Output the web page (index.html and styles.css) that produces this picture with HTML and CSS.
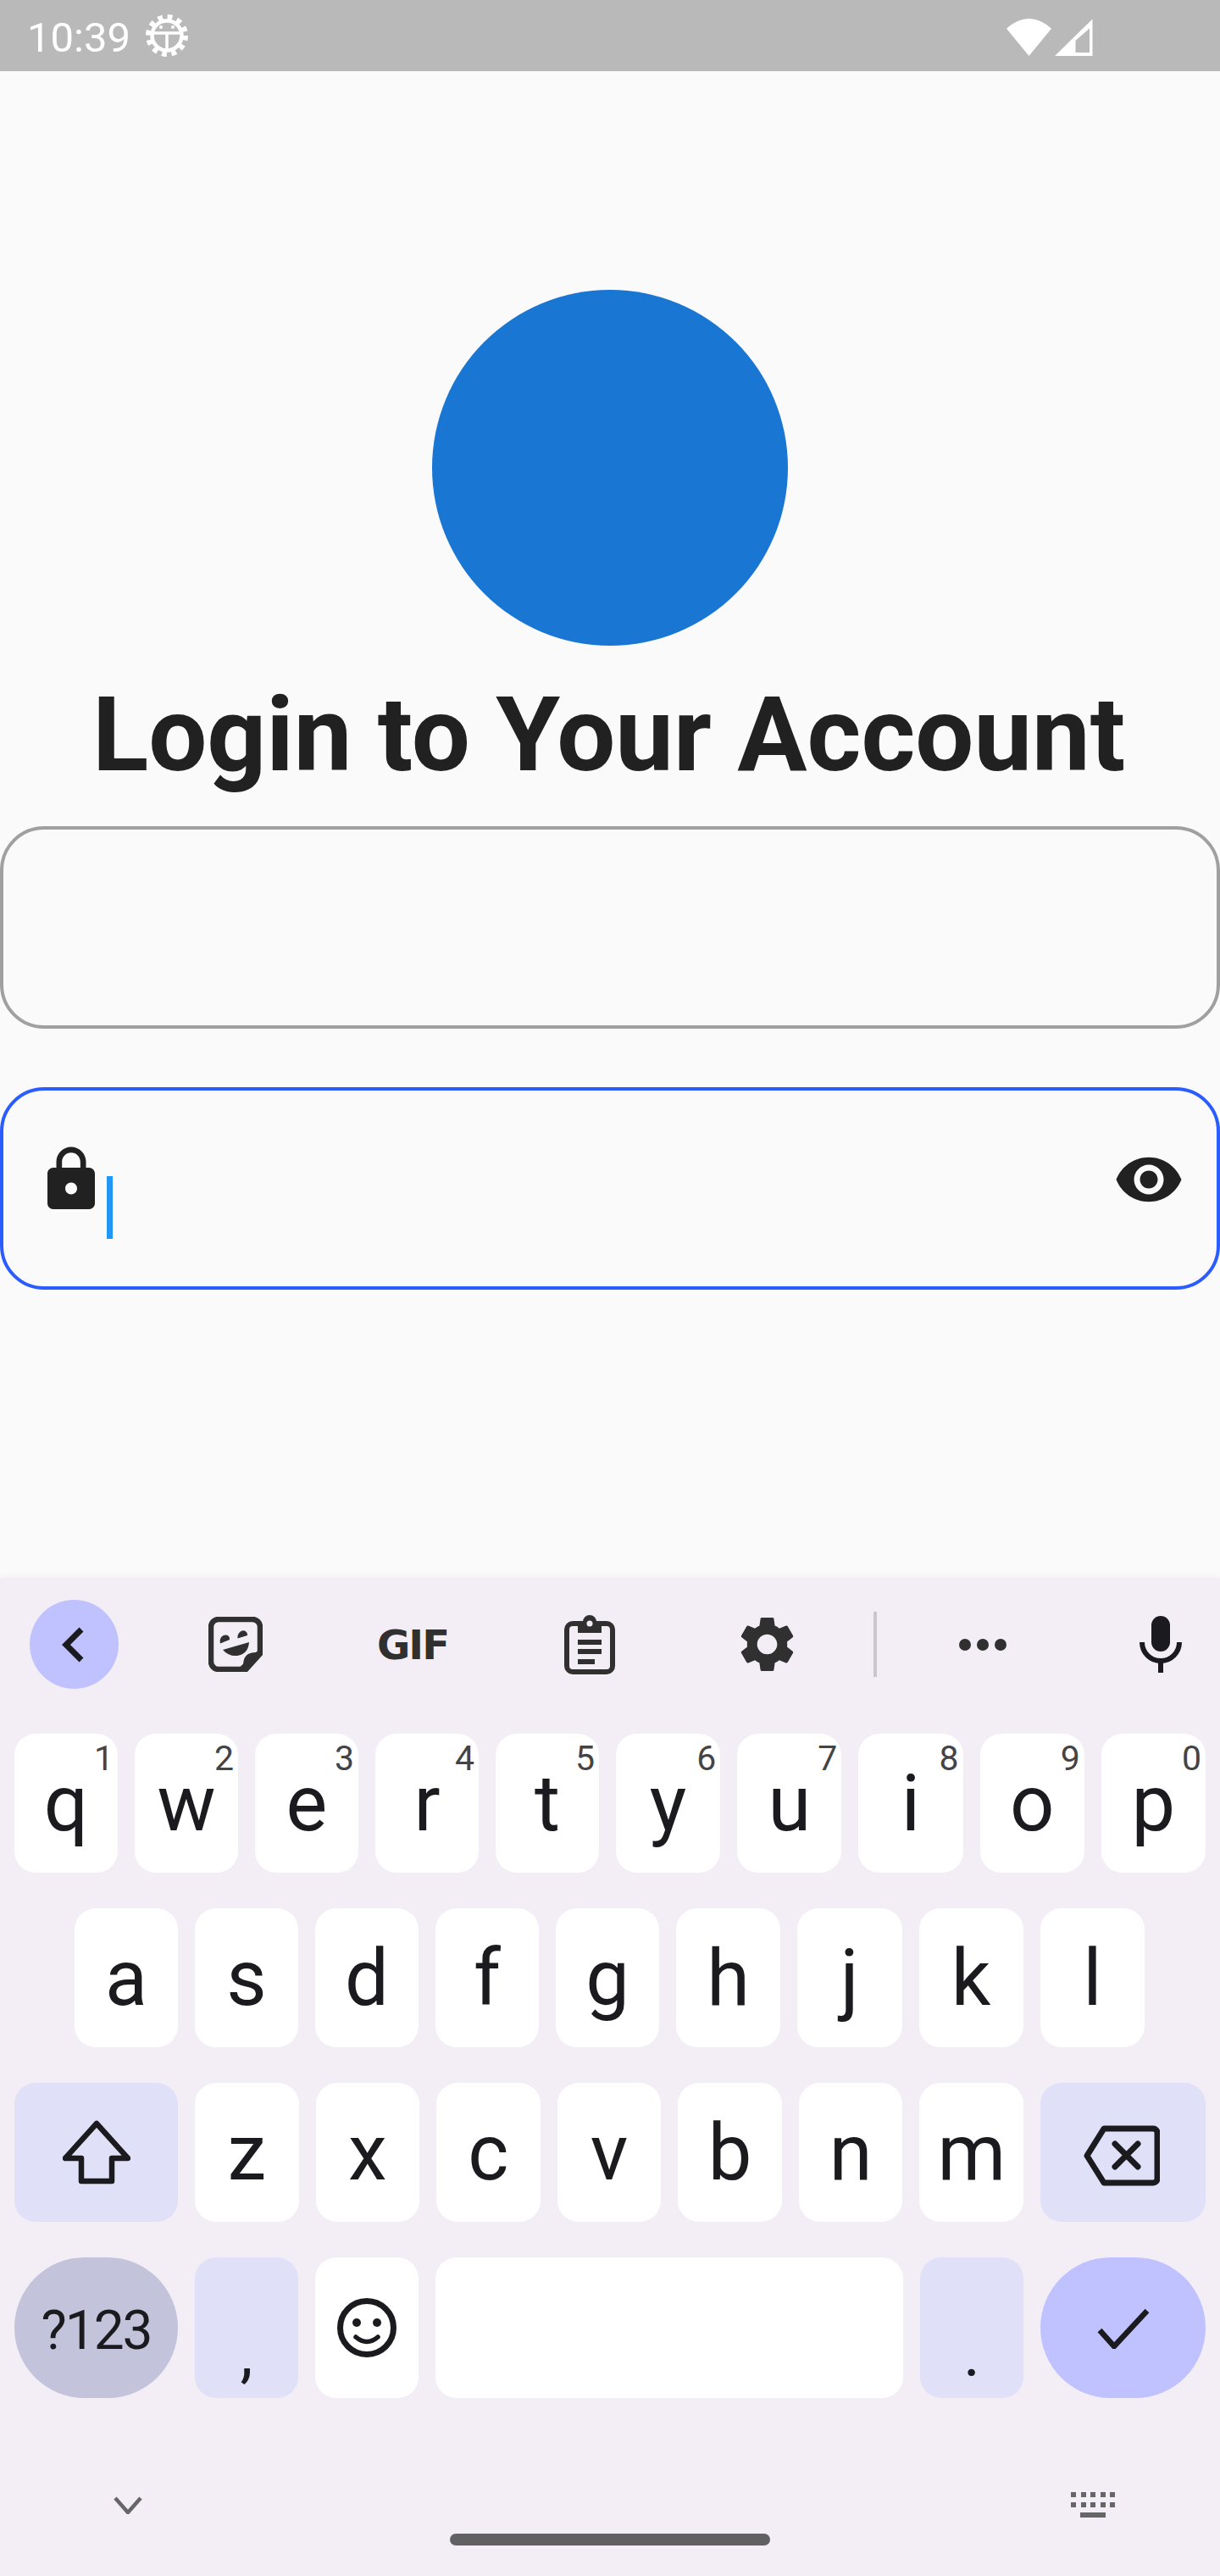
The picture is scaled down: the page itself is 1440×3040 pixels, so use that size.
FILE: index.html
```html
<!DOCTYPE html>
<html lang="en">
<head>
    <meta charset="UTF-8">
    <title>Login to Your Account</title>
    <link rel="stylesheet" href="styles.css">
</head>
<body>
    <div class="phone">
        <div class="status-bar">
            <span class="clock">10:39</span>
            <svg class="debug-icon" viewBox="0 0 52 52">
                <circle cx="26" cy="26" r="21.5" fill="none" stroke="#fff" stroke-width="7" stroke-dasharray="5.6 5.66"/>
                <circle cx="26" cy="26" r="17.5" fill="none" stroke="#fff" stroke-width="4.5"/>
                <path d="M8 23H44M26 23V44" fill="none" stroke="#fff" stroke-width="3.5"/>
                <circle cx="19" cy="16" r="2" fill="#fff"/>
                <circle cx="33" cy="16" r="2" fill="#fff"/>
            </svg>
            <div class="status-right">
                <svg class="wifi-icon" viewBox="0 0 53 44"><path d="M0 11.7Q26.5 -11.7 53 11.7L26.5 44Z" fill="#fff"/></svg>
                <svg class="cell-icon" viewBox="0 0 45 44"><path d="M44.5 0.5V44H0ZM41 11.5L24.5 26V40H41Z" fill="#fff" fill-rule="evenodd"/></svg>
            </div>
        </div>

        <div class="login">
            <div class="logo"></div>
            <h1>Login to Your Account</h1>
            <div class="field"></div>
            <div class="field focused">
                <svg class="field-icon" viewBox="0 0 24 24"><path d="M18 8h-1V6c0-2.76-2.24-5-5-5S7 3.24 7 6v2H6c-1.1 0-2 .9-2 2v10c0 1.1.9 2 2 2h12c1.1 0 2-.9 2-2V10c0-1.1-.9-2-2-2zm-6 9c-1.1 0-2-.9-2-2s.9-2 2-2 2 .9 2 2-.9 2-2 2zm3.1-9H8.9V6c0-1.71 1.39-3.1 3.1-3.1 1.71 0 3.1 1.39 3.1 3.1v2z"/></svg>
                <span class="caret"></span>
                <svg class="field-icon eye" viewBox="0 0 24 24"><path d="M12 4.5C7 4.5 2.73 7.61 1 12c1.73 4.39 6 7.5 11 7.5s9.27-3.11 11-7.5c-1.73-4.39-6-7.5-11-7.5zM12 17c-2.76 0-5-2.24-5-5s2.24-5 5-5 5 2.24 5 5-2.24 5-5 5zm0-8c-1.66 0-3 1.34-3 3s1.34 3 3 3 3-1.34 3-3-1.34-3-3-3z"/></svg>
            </div>
        </div>

        <div class="keyboard">
            <div class="toolbar">
                <div class="tool-back">
                    <svg class="back-icon" viewBox="0 0 105 105"><path d="M61 35L43 53L61 71" fill="none" stroke="#1b1b1f" stroke-width="7"/></svg>
                </div>
                <svg class="sticker-icon" viewBox="0 0 64 65">
                    <path d="M12 3H52a9 9 0 0 1 9 9V42L39 62H12a9 9 0 0 1-9-9V12a9 9 0 0 1 9-9Z" fill="none" stroke="#303030" stroke-width="6.5"/>
                    <path d="M41 65V57Q41 42 56 42H64V45L46 65Z" fill="#303030"/>
                    <path d="M14 31.5C12 24 19 19 24 23Q25.5 25 25 27Z" fill="#303030"/>
                    <path d="M34.5 25.5C33.5 18 42 13 45.5 19Q46 20 46 22Z" fill="#303030"/>
                    <path d="M17 39L48 30Q47 44 34 46Q24 47 17 39Z" fill="#303030"/>
                </svg>
                <span class="gif">GIF</span>
                <svg class="clip-icon" viewBox="0 0 60 70">
                    <rect x="3" y="10" width="54" height="57" rx="7" fill="none" stroke="#303030" stroke-width="6"/>
                    <path d="M16 8H22a8 8 0 0 1 16 0H44V21H16Z" fill="#303030"/>
                    <circle cx="30" cy="10" r="3.5" fill="#f3eef5"/>
                    <path d="M16 32H44M16 43H44M16 55H36" stroke="#303030" stroke-width="6"/>
                </svg>
                <svg class="gear-icon" viewBox="0 0 24 24"><path d="M19.14 12.94c.04-.3.06-.61.06-.94 0-.32-.02-.64-.07-.94l2.03-1.58c.18-.14.23-.41.12-.61l-1.92-3.32c-.12-.22-.37-.29-.59-.22l-2.39.96c-.5-.38-1.03-.7-1.62-.94l-.36-2.54c-.04-.24-.24-.41-.48-.41h-3.84c-.24 0-.43.17-.47.41l-.36 2.54c-.59.24-1.13.57-1.62.94l-2.39-.96c-.22-.08-.47 0-.59.22L2.74 8.87c-.12.21-.08.47.12.61l2.03 1.58c-.05.3-.09.63-.09.94s.02.64.07.94l-2.03 1.58c-.18.14-.23.41-.12.61l1.92 3.32c.12.22.37.29.59.22l2.39-.96c.5.38 1.03.7 1.62.94l.36 2.54c.05.24.24.41.48.41h3.84c.24 0 .44-.17.47-.41l.36-2.54c.59-.24 1.13-.56 1.62-.94l2.39.96c.22.08.47 0 .59-.22l1.92-3.32c.12-.22.07-.47-.12-.61l-2.01-1.58zM12 15.6c-1.98 0-3.6-1.62-3.6-3.6s1.62-3.6 3.6-3.6 3.6 1.62 3.6 3.6-1.62 3.6-3.6 3.6z" fill="#303030"/></svg>
                <div class="tool-divider"></div>
                <div class="tool-dots"><span></span><span></span><span></span></div>
                <svg class="mic-icon" viewBox="0 0 50 68">
                    <rect x="14" y="0" width="22" height="42" rx="11" fill="#1b1b1f"/>
                    <path d="M3 31a22 22 0 0 0 44 0M25 53V67" fill="none" stroke="#1b1b1f" stroke-width="6"/>
                </svg>
            </div>

            <div class="key-rows">
                <div class="key-row letters">
                    <div class="key">q<span class="hint">1</span></div>
                    <div class="key">w<span class="hint">2</span></div>
                    <div class="key">e<span class="hint">3</span></div>
                    <div class="key">r<span class="hint">4</span></div>
                    <div class="key">t<span class="hint">5</span></div>
                    <div class="key">y<span class="hint">6</span></div>
                    <div class="key">u<span class="hint">7</span></div>
                    <div class="key">i<span class="hint">8</span></div>
                    <div class="key">o<span class="hint">9</span></div>
                    <div class="key">p<span class="hint">0</span></div>
                </div>
                <div class="key-row letters home-row">
                    <div class="key">a</div>
                    <div class="key">s</div>
                    <div class="key">d</div>
                    <div class="key">f</div>
                    <div class="key">g</div>
                    <div class="key">h</div>
                    <div class="key">j</div>
                    <div class="key">k</div>
                    <div class="key">l</div>
                </div>
                <div class="key-row">
                    <div class="key wide soft">
                        <svg class="shift-icon" viewBox="0 0 80 76"><path d="M40 4L3 45H22V72H58V45H77Z" fill="none" stroke="#1b1b1f" stroke-width="6.5" stroke-linejoin="round"/></svg>
                    </div>
                    <div class="key">z</div>
                    <div class="key">x</div>
                    <div class="key">c</div>
                    <div class="key">v</div>
                    <div class="key">b</div>
                    <div class="key">n</div>
                    <div class="key">m</div>
                    <div class="key wider soft">
                        <svg class="delete-icon" viewBox="0 0 90 72">
                            <path d="M4 36L24 4H82a5 5 0 0 1 5 5V63a5 5 0 0 1-5 5H24Z" fill="none" stroke="#1b1b1f" stroke-width="7" stroke-linejoin="round"/>
                            <path d="M37 22L64 49M64 22L37 49" stroke="#1b1b1f" stroke-width="7" stroke-linecap="round"/>
                        </svg>
                    </div>
                </div>
                <div class="key-row last-row">
                    <div class="key wide pill grey symbols">?123</div>
                    <div class="key soft punct">,</div>
                    <div class="key">
                        <svg class="emoji-icon" viewBox="0 0 70 70">
                            <circle cx="35" cy="35" r="31.5" fill="none" stroke="#1b1b1f" stroke-width="7"/>
                            <circle cx="23" cy="29" r="5" fill="#1b1b1f"/>
                            <circle cx="47" cy="29" r="5" fill="#1b1b1f"/>
                            <path d="M22 46Q35 57 48 46" fill="none" stroke="#1b1b1f" stroke-width="5.5" stroke-linecap="round"/>
                        </svg>
                    </div>
                    <div class="key space"></div>
                    <div class="key soft punct">.</div>
                    <div class="key wider pill accent">
                        <svg class="check-icon" viewBox="0 0 62 48"><path d="M3 26L20 45L59 3" fill="none" stroke="#1b1b1f" stroke-width="6.5"/></svg>
                    </div>
                </div>
            </div>

            <div class="nav-bar">
                <div class="nav-left">
                    <svg class="nav-chevron" viewBox="0 0 34 21"><path d="M2 2L17 19L32 2" fill="none" stroke="#666" stroke-width="4.5"/></svg>
                </div>
                <div class="home-handle"></div>
                <div class="nav-right">
                    <div class="kb-dots">
                        <span></span><span></span><span></span><span></span><span></span>
                        <span></span><span></span><span></span><span></span><span></span>
                    </div>
                    <div class="kb-bar"></div>
                </div>
            </div>
        </div>
    </div>
</body>
</html>
```

FILE: styles.css
```css
* {
    box-sizing: border-box;
}
body {
    margin: 0;
    font-family: Roboto, "Liberation Sans", sans-serif;
    background-color: #fafafa;
}
.phone {
    display: flex;
    flex-direction: column;
    width: 1440px;
    height: 3040px;
    overflow: hidden;
}

/* status bar */
.status-bar {
    display: flex;
    align-items: center;
    height: 84px;
    padding: 0 150px 0 32px;
    background-color: #b9b9b9;
    color: white;
}
.clock {
    padding-top: 5px;
    font-size: 49px;
}
.debug-icon {
    width: 52px;
    height: 52px;
    margin-left: 17px;
}
.status-right {
    display: flex;
    align-items: flex-start;
    gap: 4px;
    margin-left: auto;
    padding-top: 3px;
}
.wifi-icon {
    width: 53px;
    height: 44px;
}
.cell-icon {
    width: 45px;
    height: 44px;
}

/* login form */
.login {
    flex: 1;
    display: flex;
    flex-direction: column;
    align-items: center;
    padding-top: 258px;
}
.logo {
    width: 420px;
    height: 420px;
    border-radius: 50%;
    background-color: #1976d2;
}
h1 {
    margin: 33px 0 36px;
    padding-right: 3px;
    font-size: 122.5px;
    font-weight: 700;
    color: #212121;
}
.field {
    width: 100%;
    height: 239px;
    border: 4px solid #a0a0a0;
    border-radius: 52px;
}
.field.focused {
    display: flex;
    align-items: flex-start;
    margin-top: 69px;
    padding: 63px 38px 0;
    border-color: #2a5cff;
}
.field-icon {
    width: 84px;
    height: 84px;
    fill: #212121;
}
.eye {
    margin-left: auto;
}
.caret {
    width: 7px;
    height: 74px;
    margin-top: 38px;
    background-color: #2196f3;
}

/* keyboard */
.keyboard {
    height: 1178px;
    background-color: #f3eef5;
    box-shadow: 0 -2px 6px rgba(0,0,0,0.04);
}
.toolbar {
    display: grid;
    grid-template-columns: 138.5px repeat(4, 209px) 25.5px 250px 170px;
    align-items: center;
    justify-items: center;
    height: 105px;
    margin-top: 26px;
    padding-left: 35px;
}
.tool-back {
    justify-self: start;
    width: 105px;
    height: 105px;
    border-radius: 50%;
    background-color: #c0c1ff;
}
.back-icon {
    display: block;
    width: 105px;
    height: 105px;
}
.sticker-icon {
    width: 64px;
    height: 65px;
}
.gif {
    font-family: "DejaVu Sans", sans-serif;
    font-size: 48px;
    font-weight: 700;
    line-height: 1;
    letter-spacing: -2px;
    color: #303030;
}
.clip-icon {
    width: 60px;
    height: 70px;
}
.gear-icon {
    width: 79px;
    height: 79px;
}
.tool-divider {
    justify-self: end;
    width: 4px;
    height: 77px;
    background-color: #c9c6cf;
}
.tool-dots {
    display: flex;
    gap: 7px;
}
.tool-dots span {
    width: 14px;
    height: 14px;
    border-radius: 50%;
    background-color: #303030;
}
.mic-icon {
    width: 50px;
    height: 68px;
}

.key-rows {
    display: flex;
    flex-direction: column;
    gap: 42px;
    margin-top: 53px;
    padding: 0 17px;
}
.key-row {
    display: flex;
    gap: 20px;
    height: 164px;
}
.home-row {
    padding: 0 72px 0 71px;
}
.last-row {
    height: 166px;
}
.key {
    position: relative;
    flex: 1 1 0;
    display: flex;
    align-items: center;
    justify-content: center;
    border-radius: 25px;
    background-color: white;
    font-size: 92px;
    color: #1b1b1f;
}
.letters .key:nth-child(-n+5) {
    flex: 0 0 122px;
}
.hint {
    position: absolute;
    top: 9px;
    right: 5px;
    font-size: 41px;
    line-height: 41px;
    color: #444;
}
.wide {
    flex: 0 0 193px;
}
.wider {
    flex: 0 0 195px;
}
.space {
    flex: 0 0 552px;
}
.soft {
    background-color: #e0e0f8;
}
.pill {
    border-radius: 83px;
}
.grey {
    background-color: #c3c3dc;
}
.accent {
    background-color: #c0c1ff;
}
.symbols {
    padding-top: 6px;
    font-size: 64px;
    letter-spacing: -2px;
}
.punct {
    padding-top: 60px;
    font-size: 76px;
}
.shift-icon {
    width: 80px;
    height: 76px;
}
.delete-icon {
    width: 90px;
    height: 72px;
    margin: 7px 4px 0 0;
}
.emoji-icon {
    width: 70px;
    height: 70px;
}
.check-icon {
    width: 62px;
    height: 48px;
    margin-top: 2px;
}

/* navigation */
.nav-bar {
    display: grid;
    grid-template-columns: 1fr 378px 1fr;
    padding-top: 111px;
}
.nav-left {
    padding: 5px 0 0 134px;
}
.nav-chevron {
    display: block;
    width: 34px;
    height: 21px;
}
.home-handle {
    height: 14px;
    margin-top: 49px;
    border-radius: 7px;
    background-color: #616163;
}
.nav-right {
    display: flex;
    flex-direction: column;
    align-items: center;
    justify-self: end;
    width: 52px;
    margin-right: 124px;
}
.kb-dots {
    display: grid;
    grid-template-columns: repeat(5, 6px);
    gap: 6px 5.5px;
}
.kb-dots span {
    height: 6px;
    background-color: #666;
}
.kb-bar {
    width: 30px;
    height: 6px;
    margin-top: 6px;
    background-color: #666;
}
```
